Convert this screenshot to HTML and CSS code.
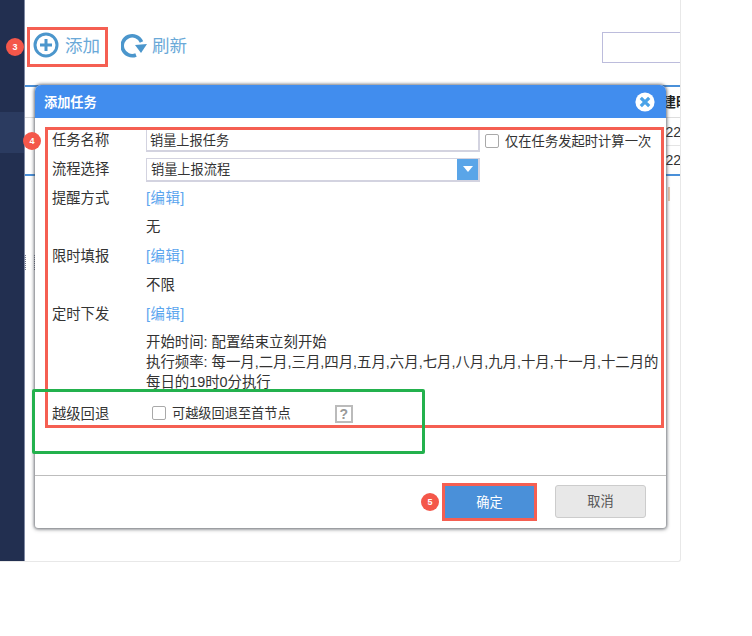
FILE: index.html
```html
<!DOCTYPE html>
<html lang="zh-CN">
<head>
<meta charset="utf-8">
<title>添加任务</title>
<link rel="stylesheet" href="styles.css">
</head>
<body>
<div class="window">
  <aside class="sidebar"><div class="side-active"></div></aside>
  <main class="main">
    <div class="toolbar">
      <button class="tool tool-add" type="button">
        <svg class="tool-icon" viewBox="0 0 26 26"><circle cx="13" cy="13" r="11" fill="none" stroke="#4b96cc" stroke-width="3"/><path d="M13 7v12M7 13h12" stroke="#4b96cc" stroke-width="3" fill="none"/></svg>
        <span class="tool-text">添加</span>
      </button>
      <button class="tool tool-refresh" type="button">
        <svg class="tool-icon" viewBox="0 0 26 26"><path d="M15 23A10 10 0 1 1 20.5 10" fill="none" stroke="#4b96cc" stroke-width="3.6"/><path d="M14 13L26 12L20 21z" fill="#4b96cc"/></svg>
        <span class="tool-text">刷新</span>
      </button>
      <input class="search" type="text">
    </div>
    <div class="table">
      <div class="t-row t-head"><span class="t-cell">创建时间</span></div>
      <div class="t-row"><span class="t-cell">2022</span></div>
      <div class="t-row t-last"><span class="t-cell">2022</span></div>
    </div>
    <div class="pager-mark"></div>
    <div class="splitter"></div>
  </main>
</div>

<section class="dialog">
  <header class="d-head">
    <h1 class="d-title">添加任务</h1>
    <svg class="d-close" viewBox="0 0 20 20"><circle cx="10" cy="10" r="9.6" fill="#fff"/><path d="M5.8 5.8l8.4 8.4M14.2 5.8l-8.4 8.4" stroke="#4aa3e8" stroke-width="3.2" fill="none"/></svg>
  </header>
  <div class="d-body">
    <div class="row">
      <label class="lbl">任务名称</label>
      <input class="field" type="text" value="销量上报任务">
      <span class="check"></span>
      <span class="check-text">仅在任务发起时计算一次</span>
    </div>
    <div class="row">
      <label class="lbl">流程选择</label>
      <div class="select"><span class="select-val">销量上报流程</span><span class="select-btn"><i class="caret"></i></span></div>
    </div>
    <div class="row"><label class="lbl">提醒方式</label><a class="edit">[编辑]</a></div>
    <div class="row"><span class="lbl"></span><span class="val">无</span></div>
    <div class="row"><label class="lbl">限时填报</label><a class="edit">[编辑]</a></div>
    <div class="row"><span class="lbl"></span><span class="val">不限</span></div>
    <div class="row"><label class="lbl">定时下发</label><a class="edit">[编辑]</a></div>
    <div class="multi">
      <div>开始时间: 配置结束立刻开始</div>
      <div>执行频率: 每一月,二月,三月,四月,五月,六月,七月,八月,九月,十月,十一月,十二月的</div>
      <div>每日的19时0分执行</div>
    </div>
    <div class="row row-skip">
      <label class="lbl">越级回退</label>
      <span class="check check-skip"></span>
      <span class="skip-text">可越级回退至首节点</span>
      <span class="help">?</span>
    </div>
  </div>
  <footer class="d-foot">
    <button class="btn btn-ok" type="button">确定</button>
    <button class="btn btn-cancel" type="button">取消</button>
  </footer>
</section>

<div class="mark mark-add"></div>
<div class="mark mark-form"></div>
<div class="mark mark-ok"></div>
<div class="mark-green"></div>
<span class="badge badge-3">3</span>
<span class="badge badge-4">4</span>
<span class="badge badge-5">5</span>
</body>
</html>
```
FILE: styles.css
```css
* { box-sizing: border-box; }
html, body { margin: 0; padding: 0; background: #fff; }
body {
  position: relative;
  width: 752px;
  height: 636px;
  overflow: hidden;
  font-family: "Liberation Sans", "Noto Sans CJK SC", sans-serif;
  color: #333;
  font-size: 14px;
}
.window {
  display: flex;
  width: 681px;
  height: 562px;
  border-right: 1px solid #e8e8e8;
  border-bottom: 1px solid #e8e8e8;
  border-bottom-right-radius: 3px;
}
.sidebar {
  width: 25px;
  flex: none;
  padding-top: 112px;
  background: #222f50;
  border-right: 1px solid #7f89a3;
}
.side-active { height: 41px; background: #2b3b60; }
.main { position: relative; flex: 1; min-width: 0; overflow: hidden; }

.toolbar {
  display: flex;
  align-items: center;
  height: 85px;
  padding-left: 8px;
  padding-top: 5px;
}
.tool {
  display: flex;
  align-items: center;
  gap: 6px;
  flex: none;
  padding: 0;
  border: 0;
  background: none;
  font: inherit;
  font-size: 17.5px;
  color: #6aa9d8;
  white-space: nowrap;
}
.tool-add { margin-right: 21px; }
.tool-refresh { gap: 5px; }
.tool-icon { width: 26px; height: 26px; flex: none; }
.tool-text { padding-bottom: 2px; }
.search {
  width: 90px;
  height: 31px;
  flex: none;
  margin-left: 415px;
  margin-top: 4px;
  border: 1px solid #bcbcdc;
  background: #fff;
}

.table { border-top: 2px solid #4a90d9; }
.t-row {
  display: flex;
  height: 28px;
  padding-left: 625px;
  border-bottom: 1px solid #e4e4e4;
  align-items: center;
  white-space: nowrap;
}
.t-head { height: 31px; padding-left: 623px; padding-bottom: 2px; font-weight: 700; color: #222; border-bottom-color: #ddd; }
.t-last { height: 30px; border-bottom: 2px solid #4a90d9; }
.t-cell { display: block; }
.pager-mark { width: 2px; height: 14px; margin: 11px 0 0 643px; background: #e8c9b0; }
.splitter {
  position: absolute;
  left: 0;
  top: 255px;
  width: 10px;
  height: 15px;
  border-left: 1px dotted #777c8e;
  border-right: 1px dotted #777c8e;
}

.dialog {
  position: absolute;
  left: 35px;
  top: 85px;
  width: 631px;
  height: 443px;
  display: flex;
  flex-direction: column;
  background: #fff;
  border-radius: 6px 6px 3px 3px;
  box-shadow: 0 0 3px 1px rgba(70, 75, 85, .6), 0 1px 5px rgba(0, 0, 0, .3);
}
.d-head {
  display: flex;
  align-items: center;
  justify-content: space-between;
  height: 33px;
  flex: none;
  padding: 0 11px 0 9px;
  background: #418dee;
  border-radius: 6px 6px 0 0;
}
.d-title { margin: 0; font-size: 13.2px; font-weight: 700; color: #fff; }
.d-close { width: 20px; height: 20px; }
.d-body {
  flex: 1;
  padding: 8px 0 0 17px;
  border-bottom: 1px solid #bdbdbd;
  font-size: 14.4px;
}
.row { display: flex; align-items: center; height: 29px; }
.lbl { width: 94px; flex: none; padding-bottom: 5px; font-size: 14.3px; color: #333; }
.field {
  width: 334px;
  height: 23px;
  flex: none;
  padding: 0 3px 2px;
  border: 1px solid #d3d3e0;
  border-width: 1px 2px 2px 1px;
  font: inherit;
  font-size: 13.2px;
  color: #333;
}
.check {
  width: 14px;
  height: 14px;
  flex: none;
  margin-left: 5px;
  border: 1px solid #a9a9a9;
  border-radius: 2px;
  background: #fff;
}
.check-text { margin-left: 6px; font-size: 13.3px; white-space: nowrap; }
.select {
  display: flex;
  align-items: center;
  justify-content: space-between;
  width: 334px;
  height: 24px;
  flex: none;
  padding-left: 4px;
  border: 1px solid #d3d3e0;
  border-width: 1px 2px 2px 1px;
  font-size: 13.2px;
}
.select-val { padding-bottom: 2px; }
.select-btn {
  display: flex;
  align-items: center;
  justify-content: center;
  width: 21px;
  height: 100%;
  background: #5aa5e8;
}
.caret {
  width: 0;
  height: 0;
  border-left: 5px solid transparent;
  border-right: 5px solid transparent;
  border-top: 6px solid #fff;
}
.edit { padding-bottom: 5px; color: #5ba5ee; font-size: 14.4px; letter-spacing: .5px; }
.val { padding-bottom: 5px; font-size: 14.4px; }
.multi { padding: 3px 0 8px 94px; line-height: 20px; white-space: nowrap; }
.row-skip { height: 29px; }
.check-skip { margin-left: 6px; margin-top: -3px; }
.skip-text { margin-left: 6px; margin-top: -5px; font-size: 13.2px; white-space: nowrap; }
.help {
  display: flex;
  align-items: center;
  justify-content: center;
  width: 18px;
  height: 18px;
  margin-left: 44px;
  margin-top: -2px;
  border: 2px solid #bbb;
  font-weight: 700;
  font-size: 14px;
  line-height: 1;
  color: #999;
}
.d-foot {
  display: flex;
  justify-content: flex-end;
  align-items: flex-start;
  gap: 21px;
  height: 52px;
  flex: none;
  padding: 9px 20px 0 0;
}
.btn {
  height: 33px;
  padding: 0 0 3px;
  font: inherit;
  font-size: 13.2px;
  border-radius: 3px;
}
.btn-ok { width: 89px; margin-top: 1px; border: 0; border-radius: 0; background: #4a90d9; color: #fff; }
.btn-cancel { width: 91px; border: 1px solid #ccc; background: #e8e8e8; color: #555; }

.mark { position: absolute; border: 3px solid #f55f52; pointer-events: none; }
.mark-add { left: 27px; top: 27px; width: 81px; height: 40px; }
.mark-form { left: 45px; top: 127px; width: 619px; height: 301px; }
.mark-ok { left: 442px; top: 483px; width: 95px; height: 38px; }
.mark-green {
  position: absolute;
  left: 32px;
  top: 389px;
  width: 393px;
  height: 65px;
  border: 3px solid #23b14d;
  border-radius: 2px;
}
.badge {
  position: absolute;
  width: 18px;
  height: 18px;
  border-radius: 50%;
  background: #f4574a;
  color: #fff;
  font-size: 9px;
  font-weight: 700;
  line-height: 18px;
  text-align: center;
}
.badge-3 { left: 6px; top: 38px; }
.badge-4 { left: 23px; top: 132px; }
.badge-5 { left: 421px; top: 493px; }
```
